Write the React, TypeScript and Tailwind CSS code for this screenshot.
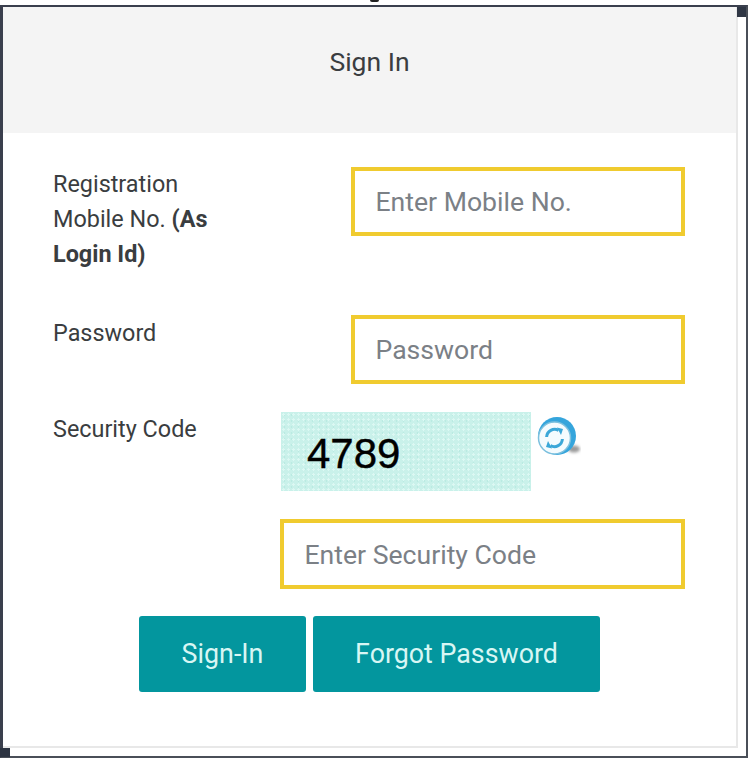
const inputClass =
  'h-full w-full border-[4px] border-[#f0cb2f] bg-white pl-[20.5px] pr-3 text-[26.6px] text-gray-700 outline-none placeholder:text-[#7b8086]';

function RefreshBadge() {
  return (
    <svg width="44" height="44" viewBox="0 0 44 44" className="ml-[6px] mt-[4px]">
      <defs>
        <filter id="soft" x="-50%" y="-50%" width="200%" height="200%">
          <feGaussianBlur stdDeviation="1.5" />
        </filter>
      </defs>
      <ellipse cx="37" cy="33" rx="6" ry="3.5" fill="#9a9a9a" filter="url(#soft)" />
      <circle cx="20" cy="20" r="19" fill="#35a5dc" />
      <circle cx="17.5" cy="22" r="16" fill="#f4fbfe" stroke="#7cc0de" strokeWidth="1.5" />
      <g fill="#3ba7d8">
        <path d="M9.6 21a8 8 0 0 1 12-6.5" fill="none" stroke="#3ba7d8" strokeWidth="3" />
        <path d="M20 11.5l6 1.5-2 6z" />
        <g transform="rotate(180 17.5 22)">
          <path d="M9.6 21a8 8 0 0 1 12-6.5" fill="none" stroke="#3ba7d8" strokeWidth="3" />
          <path d="M20 11.5l6 1.5-2 6z" />
        </g>
      </g>
    </svg>
  );
}

export default function App() {
  return (
    <div className="relative h-[761px] w-[748px] overflow-hidden bg-white font-['Roboto',sans-serif] text-[#3a3d40]">
      <div className="absolute left-[370px] top-0 h-[2px] w-[9px] rounded-b-full bg-[#222]" />
      <div className="h-[5px]" />
      <div className="h-[753px] border-t-[2px] border-b-[2px] border-l-[3px] border-r-[2px] border-t-[#3a3f4d] border-b-[#4a4f58] border-l-[#3a3f4d] border-r-[#4a4f58] pr-[8px]">
        <div className="h-[741px] border-b-[2px] border-r-[2px] border-[#e8e8e8]">
          <div className="flex h-[126px] items-center justify-center bg-[#f4f4f4] pb-[16px] text-[26.5px]">
            Sign In
          </div>

          <div className="pl-[50px] pr-[51px] pt-[34px]">
            <div className="flex items-start justify-between">
              <div className="w-[190px] text-[23.4px] leading-[35px]">
                Registration Mobile No. <b className="font-bold">(As Login Id)</b>
              </div>
              <div className="h-[69px] w-[334px]">
                <input className={inputClass} placeholder="Enter Mobile No." />
              </div>
            </div>

            <div className="mt-[43px] flex items-start justify-between">
              <div className="pt-[1px] text-[23.4px] leading-[35px]">Password</div>
              <div className="h-[69px] w-[334px]">
                <input className={inputClass} placeholder="Password" />
              </div>
            </div>

            <div className="mt-[28px] flex items-start">
              <div className="w-[228px] text-[23.4px] leading-[35px]">Security Code</div>
              <div className="flex">
                <div className="flex h-[79px] w-[250px] items-center bg-[#c9f1ea] bg-[radial-gradient(#dcf8f3_1px,transparent_1.4px),radial-gradient(#b9ebe2_0.8px,transparent_1.2px)] bg-[length:5px_5px,7px_6px] pl-[26px] pt-[4px] font-['Liberation_Sans',sans-serif] text-[42px] text-black [-webkit-text-stroke:0.4px_black]">
                  4789
                </div>
                <RefreshBadge />
              </div>
            </div>

            <div className="mt-[28px] flex justify-end">
              <div className="h-[70px] w-[405px]">
                <input className={inputClass} placeholder="Enter Security Code" />
              </div>
            </div>

            <div className="mt-[27px] ml-[86px] flex gap-[7px] text-[26.8px] text-[#d8f6f4]">
              <button className="flex h-[76px] w-[167px] items-center justify-center rounded-[3px] bg-[#03969e]">
                Sign-In
              </button>
              <button className="flex h-[76px] w-[287px] items-center justify-center rounded-[3px] bg-[#03969e]">
                Forgot Password
              </button>
            </div>
          </div>
        </div>
      </div>
      <div className="absolute right-[2px] top-[7px] h-[10px] w-[9px] bg-[#2f3644]" />
      <div className="absolute bottom-[4px] left-0 h-[9px] w-[10px] bg-[#2c3341]" />
    </div>
  );
}
